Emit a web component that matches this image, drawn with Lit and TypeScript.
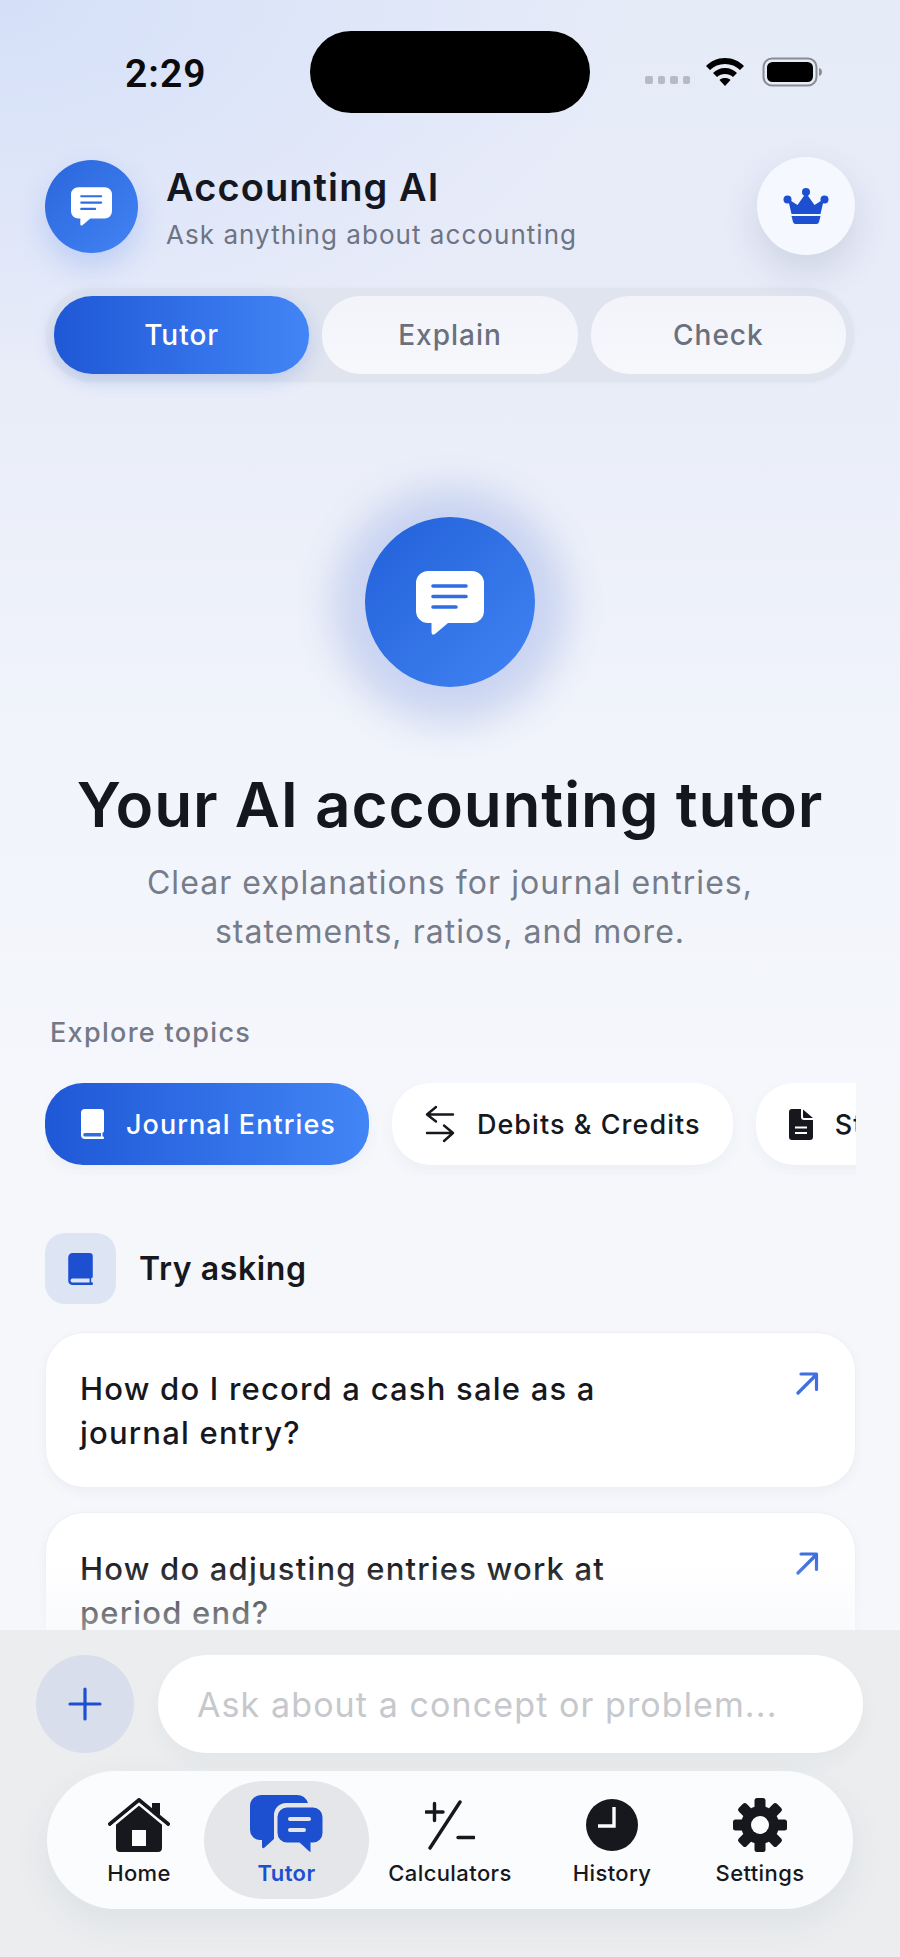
import { LitElement, html, css, svg } from "lit";
import { customElement } from "lit/decorators.js";

const bubble = (fg: string, bars: string) => html`
  <svg viewBox="0 0 68 64" width="100%" height="100%">
    <path fill=${fg} d="M12 0H56A12 12 0 0 1 68 12V40A12 12 0 0 1 56 52H32L19 63Q15.500 65 15.500 61V52H12A12 12 0 0 1 0 40V12A12 12 0 0 1 12 0Z"/>
    <path stroke=${bars} stroke-width="3.600" stroke-linecap="round" d="M17 15H50M17 25.500H50M17 36H40"/>
  </svg>`;

const book = (fg: string, cut: string) => html`
  <svg viewBox="0 0 23 30" width="100%" height="100%">
    <path fill=${fg} d="M4 0H20A3 3 0 0 1 23 3V22A2 2 0 0 1 21.500 23.800V27.500H22A1.250 1.250 0 0 1 22 30H4A4 4 0 0 1 0 26V4A4 4 0 0 1 4 0Z"/>
    <path fill=${cut} d="M4 24H20V27.600H4A1.800 1.800 0 0 1 4 24Z"/>
  </svg>`;

const arrow = html`
  <svg viewBox="0 0 24 24" width="24" height="24" fill="none" stroke="#3f6fe0" stroke-width="3.200" stroke-linecap="round" stroke-linejoin="round">
    <path d="M3 22L21 4M6 3H21.500V18.500"/>
  </svg>`;

const swap = html`
  <svg viewBox="0 0 30 38" width="30" height="38" fill="none" stroke="#16181d" stroke-width="2.400" stroke-linecap="round" stroke-linejoin="round">
    <path d="M11 2L2 9.500L11 16.500M2 9.500H28M19 20.500L28 28L19 36M28 28H2"/>
  </svg>`;

const doc = html`
  <svg viewBox="0 0 24 31" width="24" height="31">
    <path fill="#16181d" d="M3 0H12V8A3 3 0 0 0 15 11H24V28A3 3 0 0 1 21 31H3A3 3 0 0 1 0 28V3A3 3 0 0 1 3 0Z"/>
    <path fill="#16181d" d="M14 0.500L24 9H15A1 1 0 0 1 14 8Z"/>
    <path stroke="#fff" stroke-width="2" d="M6 18.500H18M6 24H18"/>
  </svg>`;

const crown = html`
  <svg viewBox="0 0 46 36" width="46" height="36" fill="#1d4fd1">
    <circle cx="23" cy="4" r="4"/><circle cx="4.500" cy="11.500" r="4"/><circle cx="41.500" cy="11.500" r="4"/>
    <path d="M23 5L31.500 17L41 11L37.500 26H8.500L5 11L14.500 17Z"/>
    <path d="M8.500 28H37.500L36 34A3 3 0 0 1 33.500 36H12.500A3 3 0 0 1 10 34Z"/>
  </svg>`;

const house = html`
  <svg viewBox="0 0 62 54" width="62" height="54">
    <path fill="#16181d" d="M8 25L31 5L44 16V5H52V23L54 25V50A4 4 0 0 1 50 54H12A4 4 0 0 1 8 50Z"/>
    <path fill="none" stroke="#16181d" stroke-width="4" stroke-linecap="round" stroke-linejoin="round" d="M2 26L31 2L60 26"/>
    <path fill="none" stroke="#fbfcfe" stroke-width="2.500" d="M2 30L31 6L60 30"/>
    <rect x="24" y="32" width="14" height="16" fill="#fbfcfe"/>
  </svg>`;

const chats = html`
  <svg viewBox="0 0 74 60" width="74" height="60">
    <path fill="#1d4fd1" d="M11 0H47A12 12 0 0 1 58 8H36A12 12 0 0 0 24 20V44L14 53Q12 54 12 51V45H10A10 10 0 0 1 0 35V11A11 11 0 0 1 11 0Z"/>
    <path fill="#1d4fd1" stroke="#e4e6e9" stroke-width="3" d="M37 11H63A11 11 0 0 1 74 22V38A11 11 0 0 1 63 49H62V57Q62 60 59 58L49 49H37A11 11 0 0 1 26 38V22A11 11 0 0 1 37 11Z"/>
    <path stroke="#e4e6e9" stroke-width="4" stroke-linecap="round" d="M40 24H59M40 35H54"/>
  </svg>`;

const calc = html`
  <svg viewBox="0 0 50 50" width="50" height="50" fill="none" stroke="#16181d" stroke-width="3.400" stroke-linecap="round">
    <path d="M1 12H18M9.500 3.500V20.500M5 48L35 2M33 37.500H49"/>
  </svg>`;

const clock = html`
  <svg viewBox="0 0 52 52" width="52" height="52">
    <circle cx="26" cy="26" r="26" fill="#16181d"/>
    <path fill="none" stroke="#fbfcfe" stroke-width="3.400" d="M28 8V27H12"/>
  </svg>`;

const gear = html`
  <svg viewBox="0 0 54 54" width="54" height="54">
    <circle cx="27" cy="27" r="19" fill="#16181d"/>
    ${[0, 45, 90, 135, 180, 225, 270, 315].map(
      (a) => svg`<rect x="21.500" y="0" width="11" height="12" rx="2.500" fill="#16181d" transform="rotate(${a} 27 27)"/>`
    )}
    <circle cx="27" cy="27" r="9" fill="#fbfcfe"/>
  </svg>`;

const navItems = [
  { label: "Home", icon: house },
  { label: "Tutor", icon: chats, active: true },
  { label: "Calculators", icon: calc },
  { label: "History", icon: clock },
  { label: "Settings", icon: gear },
];

@customElement("app-root")
export class AppRoot extends LitElement {
  static styles = css`
    :host {
      display: block;
      position: relative;
      width: 900px;
      height: 1957px;
      overflow: hidden;
      font-family: "Inter", "Noto Sans", sans-serif;
      color: #16181d;
      background:
        radial-gradient(620px 380px at 0 0, #d5e0f8 0, rgba(213, 224, 248, 0) 100%),
        linear-gradient(180deg, #e6ebf8 0, #e8ecf8 320px, #f1f4fb 760px, #f5f7fb 1100px, #f5f7fb 100%);
    }
    .status {
      display: grid;
      grid-template-columns: 1fr 280px 1fr;
      grid-template-rows: 82px;
      padding: 31px 0 0;
      height: 82px;
      box-sizing: content-box;
    }
    .time {
      font-family: "Roboto", sans-serif;
      font-size: 39px;
      font-weight: 600;
      line-height: 86px;
      padding-left: 125px;
      letter-spacing: 1px;
      color: #0b0b0c;
    }
    .island {
      background: #000;
      border-radius: 41px;
    }
    .sys {
      display: flex;
      align-items: center;
      padding: 0 0 0 55px;
      height: 82px;
    }
    .dots {
      display: flex;
      gap: 5px;
      margin-top: 16px;
    }
    .dots i {
      width: 7.500px;
      height: 8px;
      border-radius: 2px;
      background: #b6bac2;
    }
    .wifi {
      margin: 0 18px 0 16px;
      display: block;
    }
    .header {
      display: flex;
      align-items: center;
      margin-top: 44px;
      padding: 0 45px;
      gap: 28px;
    }
    .avatar {
      width: 93px;
      height: 93px;
      border-radius: 50%;
      background: linear-gradient(135deg, #2a66dc, #4283f3);
      box-shadow: 0 14px 30px rgba(45, 100, 225, 0.2);
      display: grid;
      place-items: center;
    }
    .avatar span {
      display: block;
      width: 41px;
      height: 39px;
    }
    .htext {
      flex: 1;
      padding-top: 2px;
    }
    .htext h1 {
      margin: 0;
      font-size: 38px;
      line-height: 46px;
      font-weight: 600;
      letter-spacing: 1.100px;
      color: #14171f;
    }
    .htext p {
      margin: 9px 0 0;
      font-size: 26px;
      line-height: 32px;
      letter-spacing: 1.050px;
      color: #6d7483;
    }
    .crown {
      width: 98px;
      height: 98px;
      border-radius: 50%;
      background: #f5f8fe;
      box-shadow: 0 16px 36px rgba(70, 85, 120, 0.16);
      display: grid;
      place-items: center;
    }
    .tray {
      display: grid;
      grid-template-columns: repeat(3, 1fr);
      gap: 13px;
      margin: 33px 46px 0;
      padding: 8px;
      border-radius: 47px;
      background: #dfe4ef;
      box-shadow: 0 0 5px #dfe4ef;
    }
    .tab {
      height: 78px;
      border-radius: 38px;
      display: grid;
      place-items: center;
      font-size: 28px;
      font-weight: 500;
      letter-spacing: 1px;
      color: #6a707c;
      background: linear-gradient(180deg, #f2f4fa, #f7f8fc);
    }
    .tab.on {
      color: #fff;
      background: linear-gradient(90deg, #1f58d6, #4285f6);
      box-shadow: 0 6px 20px rgba(45, 95, 220, 0.2);
    }
    .hero {
      width: 170px;
      height: 170px;
      margin: 135px auto 0;
      border-radius: 50%;
      background: linear-gradient(135deg, #2260d8, #4184f4);
      box-shadow: 0 4px 38px 32px rgba(55, 95, 205, 0.2);
      display: grid;
      place-items: center;
    }
    .hero span {
      display: block;
      width: 68px;
      height: 64px;
      margin-top: 2px;
    }
    h2 {
      margin: 82px 0 0;
      text-align: center;
      font-size: 62px;
      line-height: 72px;
      font-weight: 600;
      letter-spacing: 0.800px;
      color: #14171f;
    }
    .lead {
      margin: 17px 0 0;
      text-align: center;
      font-size: 32px;
      line-height: 49px;
      letter-spacing: 1.050px;
      color: #767c89;
    }
    .explore {
      margin: 59px 0 0 50px;
      font-size: 27px;
      line-height: 36px;
      font-weight: 500;
      letter-spacing: 1.300px;
      color: #737986;
    }
    .chips {
      display: flex;
      gap: 23px;
      margin: 32px 44px 0 45px;
      overflow: hidden;
      padding-bottom: 10px;
    }
    .chip {
      flex: none;
      height: 82px;
      box-sizing: border-box;
      display: flex;
      align-items: center;
      gap: 22px;
      padding: 0 32px 0 33px;
      border-radius: 38px;
      background: #fff;
      font-size: 27px;
      font-weight: 500;
      letter-spacing: 1.050px;
      box-shadow: 0 6px 14px rgba(80, 90, 120, 0.05);
    }
    .chip.on {
      color: #fff;
      padding: 0 33px 0 36px;
      background: linear-gradient(90deg, #1f58d6, #4285f6);
    }
    .chip.on span {
      display: block;
      width: 23px;
      height: 30px;
    }
    .try {
      display: flex;
      align-items: center;
      gap: 23px;
      margin: 58px 45px 0;
      font-size: 32px;
      font-weight: 600;
      letter-spacing: 0.600px;
    }
    .try b {
      width: 71px;
      height: 71px;
      border-radius: 20px;
      background: #dde4f4;
      display: grid;
      place-items: center;
    }
    .try b span {
      display: block;
      width: 25px;
      height: 32px;
    }
    .cards {
      display: flex;
      flex-direction: column;
      gap: 26px;
      margin: 29px 45px 0 46px;
    }
    .card {
      height: 154px;
      box-sizing: border-box;
      padding: 34px 36px 0 34px;
      display: flex;
      justify-content: space-between;
      border-radius: 38px;
      background: #fff;
      box-shadow: 0 0 0 1px #eef0f6, 0 4px 12px rgba(80, 90, 120, 0.06);
      font-size: 31px;
      line-height: 44px;
      font-weight: 500;
      letter-spacing: 1.200px;
    }
    .card p {
      margin: 0;
      width: 560px;
    }
    .card svg {
      flex: none;
      margin-top: 4px;
    }
    .dock {
      position: absolute;
      left: 0;
      right: 0;
      bottom: 0;
      height: 327px;
      box-sizing: border-box;
      padding: 25px 37px 0 36px;
      background: #ebedef;
    }
    .dock::before {
      content: "";
      position: absolute;
      left: 0;
      right: 0;
      top: -70px;
      height: 70px;
      background: linear-gradient(180deg, rgba(245, 247, 251, 0), rgba(245, 247, 251, 0.55));
    }
    .composer {
      display: flex;
      gap: 24px;
    }
    .plus {
      flex: none;
      width: 98px;
      height: 98px;
      border-radius: 50%;
      background: #d8deec;
      display: grid;
      place-items: center;
    }
    input {
      flex: 1;
      min-width: 0;
      height: 98px;
      border: 0;
      outline: 0;
      padding: 0 40px 0 39px;
      border-radius: 49px;
      background: #fff;
      font: 400 34px "Inter", sans-serif;
      letter-spacing: 1.100px;
      box-shadow: 0 10px 20px rgba(60, 70, 80, 0.04);
    }
    input::placeholder {
      color: #c6c8cc;
      opacity: 1;
    }
    .nav {
      display: grid;
      grid-template-columns: 130px 165px 162px 162px 134px;
      margin: 18px 10px 0 11px;
      padding: 10px 26px 10px 27px;
      height: 138px;
      box-sizing: border-box;
      border-radius: 69px;
      background: #fbfcfe;
      box-shadow: 0 14px 36px rgba(80, 90, 100, 0.08);
    }
    .item {
      display: flex;
      flex-direction: column;
      align-items: center;
      padding-top: 14px;
      border-radius: 60px;
      font-size: 22px;
      line-height: 28px;
      font-weight: 500;
      letter-spacing: 0.400px;
      color: #16181d;
    }
    .item.on {
      background: #e4e6e9;
      color: #1d4fd1;
      font-weight: 600;
    }
    .icon {
      height: 60px;
      margin-bottom: 4px;
      display: grid;
      place-items: center;
    }
  `;

  render() {
    return html`
      <div class="status">
        <div class="time">2:29</div>
        <div class="island"></div>
        <div class="sys">
          <div class="dots"><i></i><i></i><i></i><i></i></div>
          <svg class="wifi" viewBox="0 0 38 28" width="38" height="28">
            <path d="M19 0C27 0 33 3 38 8L34 12C30 8 25 6 19 6C13 6 8 8 4 12L0 8C5 3 11 0 19 0Z"/>
            <path d="M19 10C24 10 28 12 31 15L27 19C25 17 22 16 19 16C16 16 13 17 11 19L7 15C10 12 14 10 19 10Z"/>
            <path d="M19 20C21 20 23 20.500 24.500 22L19 28L13.500 22C15 20.500 17 20 19 20Z"/>
          </svg>
          <svg viewBox="0 0 60 30" width="60" height="30">
            <rect x="1.500" y="1.500" width="53" height="27" rx="8.500" fill="none" stroke="#8a8d94" stroke-width="2"/>
            <rect x="5" y="5" width="46" height="20" rx="5.500" fill="#000"/>
            <path d="M57 11C59 11.500 60 13 60 15C60 17 59 18.500 57 19Z" fill="#8a8d94"/>
          </svg>
        </div>
      </div>

      <div class="header">
        <div class="avatar"><span>${bubble("#fff", "#2f6de2")}</span></div>
        <div class="htext">
          <h1>Accounting AI</h1>
          <p>Ask anything about accounting</p>
        </div>
        <div class="crown">${crown}</div>
      </div>

      <div class="tray">
        <div class="tab on">Tutor</div>
        <div class="tab">Explain</div>
        <div class="tab">Check</div>
      </div>

      <div class="hero"><span>${bubble("#fff", "#2f6de2")}</span></div>
      <h2>Your AI accounting tutor</h2>
      <p class="lead">Clear explanations for journal entries,<br />statements, ratios, and more.</p>

      <div class="explore">Explore topics</div>
      <div class="chips">
        <div class="chip on"><span>${book("#fff", "#2f6de2")}</span>Journal Entries</div>
        <div class="chip">${swap}Debits &amp; Credits</div>
        <div class="chip">${doc}Statements</div>
      </div>

      <div class="try">
        <b><span>${book("#1d4fd1", "#dde4f4")}</span></b>
        Try asking
      </div>
      <div class="cards">
        <div class="card"><p>How do I record a cash sale as a journal entry?</p>${arrow}</div>
        <div class="card"><p>How do adjusting entries work at period end?</p>${arrow}</div>
      </div>

      <div class="dock">
        <div class="composer">
          <div class="plus">
            <svg viewBox="0 0 34 34" width="34" height="34" fill="none" stroke="#1d4fd1" stroke-width="3.200" stroke-linecap="round">
              <path d="M2 17H32M17 2V32"/>
            </svg>
          </div>
          <input placeholder="Ask about a concept or problem..." />
        </div>
        <div class="nav">
          ${navItems.map(
            (n) => html`
              <div class="item ${n.active ? "on" : ""}">
                <div class="icon">${n.icon}</div>
                ${n.label}
              </div>
            `
          )}
        </div>
      </div>
    `;
  }
}
